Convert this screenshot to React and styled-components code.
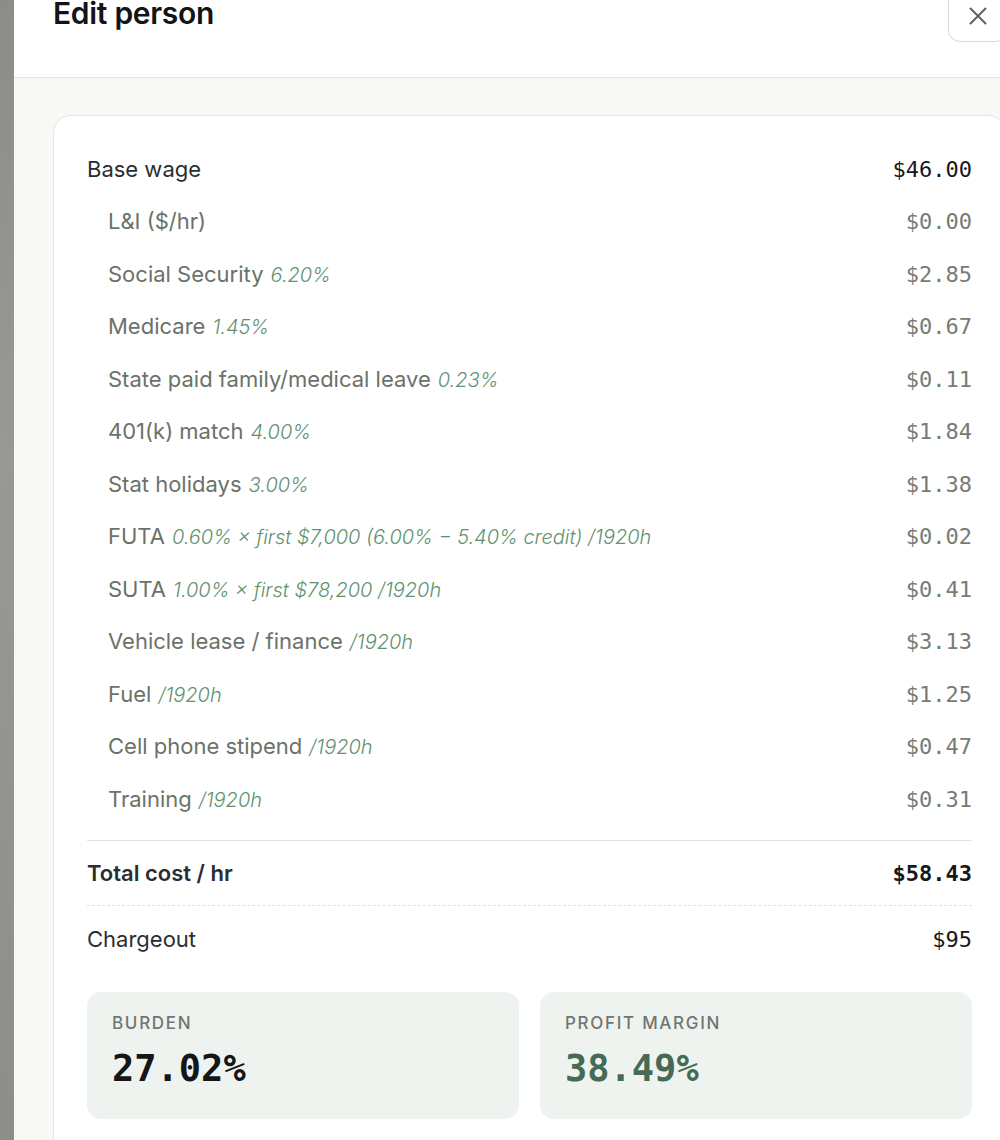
import React from "react";
import styled, { createGlobalStyle } from "styled-components";

const rows = [
  { label: "L&I ($/hr)", amount: "$0.00" },
  { label: "Social Security", rate: "6.20%", amount: "$2.85" },
  { label: "Medicare", rate: "1.45%", amount: "$0.67" },
  { label: "State paid family/medical leave", rate: "0.23%", amount: "$0.11" },
  { label: "401(k) match", rate: "4.00%", amount: "$1.84" },
  { label: "Stat holidays", rate: "3.00%", amount: "$1.38" },
  {
    label: "FUTA",
    rate: "0.60% × first $7,000 (6.00% − 5.40% credit) /1920h",
    amount: "$0.02",
  },
  { label: "SUTA", rate: "1.00% × first $78,200 /1920h", amount: "$0.41" },
  { label: "Vehicle lease / finance", rate: "/1920h", amount: "$3.13" },
  { label: "Fuel", rate: "/1920h", amount: "$1.25" },
  { label: "Cell phone stipend", rate: "/1920h", amount: "$0.47" },
  { label: "Training", rate: "/1920h", amount: "$0.31" },
];

const App = () => {
  return (
    <Backdrop>
      <GlobalStyle />
      <Modal>
        <Header>
          <Title>Edit person</Title>
          <CloseButton aria-label="Close">
            <svg width="20" height="20" viewBox="0 0 20 20" fill="none">
              <path
                d="M2.5 2.5L17.5 17.5M17.5 2.5L2.5 17.5"
                stroke="#5c655c"
                strokeWidth="2"
                strokeLinecap="round"
              />
            </svg>
          </CloseButton>
        </Header>
        <Body>
          <Card>
            <Row>
              <Label>Base wage</Label>
              <Amount>$46.00</Amount>
            </Row>
            {rows.map((row) => (
              <Row key={row.label}>
                <Label $sub>
                  {row.label}
                  {row.rate && <Rate>{row.rate}</Rate>}
                </Label>
                <Amount $muted>{row.amount}</Amount>
              </Row>
            ))}
            <Divider />
            <Row $total>
              <Label $bold>Total cost / hr</Label>
              <Amount $bold>$58.43</Amount>
            </Row>
            <Divider $dashed />
            <Row $chargeout>
              <Label>Chargeout</Label>
              <Amount>$95</Amount>
            </Row>
            <Stats>
              <Stat>
                <StatLabel>Burden</StatLabel>
                <StatValue>27.02%</StatValue>
              </Stat>
              <Stat>
                <StatLabel>Profit margin</StatLabel>
                <StatValue $green>38.49%</StatValue>
              </Stat>
            </Stats>
          </Card>
        </Body>
      </Modal>
    </Backdrop>
  );
};

export default App;

const GlobalStyle = createGlobalStyle`
  body {
    margin: 0;
    overflow: hidden;
    background: #8e908c;
    font-family: Inter, "Noto Sans", sans-serif;
  }
`;

const Backdrop = styled.div`
  display: flex;
  height: 1140px;
  overflow: hidden;
  padding-left: 14px;
  background: linear-gradient(180deg, #8b8d89 0%, #979995 40%, #8c8e8a 100%);
`;

const Modal = styled.div`
  width: 1032px;
  flex-shrink: 0;
  margin-top: -26px;
  background: #ffffff;
`;

const Header = styled.header`
  box-sizing: border-box;
  height: 104px;
  display: flex;
  justify-content: space-between;
  align-items: flex-start;
  padding: 21px 38px 0 39px;
  border-bottom: 1px solid #e4e5df;
`;

const Title = styled.h2`
  margin: 0;
  font-size: 30px;
  line-height: 36px;
  font-weight: 600;
  letter-spacing: -0.01em;
  color: #121417;
`;

const CloseButton = styled.button`
  width: 60px;
  height: 52px;
  margin-top: -5px;
  display: flex;
  align-items: center;
  justify-content: center;
  background: #ffffff;
  border: 1px solid #d6d9d0;
  border-radius: 12px;
  padding: 0;
`;

const Body = styled.div`
  background: #f8f8f5;
  padding: 37px 40px 0 39px;
  min-height: 1100px;
`;

const Card = styled.section`
  background: #ffffff;
  border: 1px solid #e4e5de;
  border-radius: 18px;
  padding: 27px 33px 40px;
`;

const Row = styled.div`
  display: flex;
  justify-content: space-between;
  align-items: baseline;
  padding: ${(p) =>
    p.$total ? "21px 0 20px" : p.$chargeout ? "22px 0 18px" : "14.5px 0"};
  line-height: 22.5px;
`;

const Label = styled.div`
  padding-left: ${(p) => (p.$sub ? "21px" : "0")};
  font-size: 22px;
  font-weight: ${(p) => (p.$bold ? 600 : 400)};
  color: ${(p) => (p.$sub ? "#6b7268" : "#2a2e33")};
`;

const Rate = styled.span`
  margin-left: 7px;
  font-size: 20px;
  font-style: italic;
  font-weight: 300;
  color: #5f9271;
`;

const Amount = styled.div`
  font-family: "DejaVu Sans Mono", "Liberation Mono", monospace;
  font-size: 22px;
  font-weight: ${(p) => (p.$bold ? 700 : 400)};
  color: ${(p) => (p.$muted ? "#767c74" : "#16181a")};
`;

const Divider = styled.hr`
  margin: ${(p) => (p.$dashed ? "0" : "14px 0 0")};
  border: none;
  border-top: ${(p) => (p.$dashed ? "1.5px dashed #e2e3dd" : "1.5px solid #e3e4de")};
`;

const Stats = styled.div`
  display: grid;
  grid-template-columns: 1fr 1fr;
  gap: 21px;
  margin-top: 22px;
`;

const Stat = styled.div`
  box-sizing: border-box;
  height: 127px;
  padding: 20px 25px 0;
  background: #eff3ef;
  border-radius: 14px;
`;

const StatLabel = styled.div`
  font-size: 17px;
  line-height: 22px;
  font-weight: 500;
  letter-spacing: 0.1em;
  text-transform: uppercase;
  color: #6f766f;
`;

const StatValue = styled.div`
  margin-top: 13px;
  font-family: "DejaVu Sans Mono", "Liberation Mono", monospace;
  font-size: 37px;
  line-height: 44px;
  font-weight: 700;
  color: ${(p) => (p.$green ? "#466b55" : "#141618")};
`;
